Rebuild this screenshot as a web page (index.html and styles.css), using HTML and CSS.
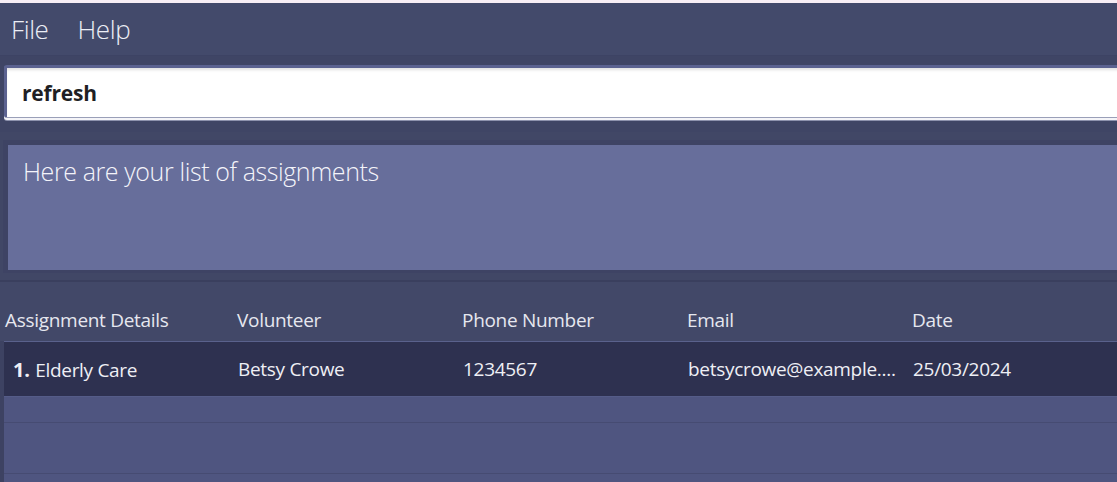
FILE: index.html
```html
<!DOCTYPE html>
<html>
<head>
<meta charset="utf-8">
<link rel="stylesheet" href="styles.css">
</head>
<body>
<div class="window">
  <div class="titlestrip"></div>
  <div class="menubar">
    <span class="menu-item">File</span>
    <span class="menu-item">Help</span>
  </div>
  <div class="command-pane">
    <div class="command-box">refresh</div>
  </div>
  <div class="result-pane">
    <div class="result-box">Here are your list of assignments</div>
  </div>
  <div class="table-pane">
    <div class="thead">
      <div class="th first">Assignment Details</div>
      <div class="th">Volunteer</div>
      <div class="th">Phone Number</div>
      <div class="th">Email</div>
      <div class="th">Date</div>
    </div>
    <div class="tbody">
      <div class="row selected">
        <div class="td"><b class="idx">1.</b> Elderly Care</div>
        <div class="td">Betsy Crowe</div>
        <div class="td">1234567</div>
        <div class="td">betsycrowe@example....</div>
        <div class="td">25/03/2024</div>
      </div>
      <div class="row empty short"></div>
      <div class="row empty"></div>
      <div class="row empty"></div>
    </div>
  </div>
</div>
</body>
</html>
```

FILE: styles.css
```css
html, body {
  margin: 0;
  padding: 0;
}
body {
  width: 1117px;
  height: 482px;
  overflow: hidden;
  background: #414766;
  font-family: "Open Sans", "Noto Sans", sans-serif;
}
.window {
  width: 1117px;
  height: 482px;
  overflow: hidden;
  display: flex;
  flex-direction: column;
}
.titlestrip {
  height: 3px;
  background: #f7eef5;
  flex: none;
}
.menubar {
  height: 53px;
  flex: none;
  background: #434a6b;
  display: flex;
  align-items: center;
  gap: 29px;
  padding-left: 11px;
  box-sizing: border-box;
  border-bottom: 1px solid #3d4364;
}
.menu-item {
  color: #eceef5;
  font-size: 26px;
  font-weight: 300;
  letter-spacing: -0.4px;
  line-height: 1;
}
.command-pane {
  flex: none;
  height: 76px;
  background: #3f4565;
  padding: 9px 0 0 4px;
  box-sizing: border-box;
}
.command-box {
  width: 1140px;
  height: 53px;
  box-sizing: border-box;
  background: #ffffff;
  border-top: 3px solid #5b6290;
  border-left: 3px solid #5b6290;
  border-bottom: 1px solid #9a9fb8;
  box-shadow: inset 0 3px 3px -1px rgba(0,0,0,0.12), 0 2px 0 #f4f4f8, 0 3px 0 #8d92ad;
  border-radius: 3px 0 0 3px;
  padding-left: 15px;
  display: flex;
  align-items: center;
  font-size: 21px;
  font-weight: 700;
  color: #1f1f24;
  letter-spacing: -0.2px;
}
.result-pane {
  flex: none;
  height: 148px;
  background: #414766;
  padding: 8px 0 0 3px;
  box-sizing: border-box;
}
.result-box {
  width: 1140px;
  height: 133px;
  box-sizing: border-box;
  background: #676e9b;
  border: 5px solid #3e4364;
  border-right: none;
  border-bottom-width: 3px;
  padding: 10px 0 0 15px;
  color: #f4f4fa;
  font-size: 25px;
  font-weight: 300;
  letter-spacing: -0.4px;
  line-height: 32px;
}
.table-pane {
  flex: 1;
  background: #424868;
  border-top: 2px solid #3a3f5e;
  display: flex;
  flex-direction: column;
}
.thead {
  display: grid;
  grid-template-columns: 237px 225px 225px 225px 225px;
  height: 59px;
  flex: none;
  align-items: center;
  background: #424868;
  padding-top: 17px;
  box-sizing: border-box;
}
.th {
  color: #e6e7ef;
  font-size: 19px;
  letter-spacing: -0.3px;
  white-space: nowrap;
}
.th.first {
  padding-left: 5px;
}
.tbody {
  flex: 1;
  padding-left: 4px;
  background: #3d4262;
}
.row {
  display: grid;
  grid-template-columns: 225px 225px 225px 225px 225px;
  height: 51px;
  box-sizing: border-box;
  background: #4f5580;
  border-bottom: 1px solid #464b72;
}
.row.selected {
  height: 56px;
  background: #2e3150;
  border-top: 1px solid #5a618c;
  border-bottom: 1px solid #555c88;
  align-items: center;
}
.row.short {
  height: 26px;
}
.td {
  color: #eeeff5;
  font-size: 19px;
  letter-spacing: -0.3px;
  padding-left: 9px;
  white-space: nowrap;
  overflow: hidden;
}
.idx {
  font-weight: 700;
  font-size: 20px;
  margin-right: 1px;
}
```
